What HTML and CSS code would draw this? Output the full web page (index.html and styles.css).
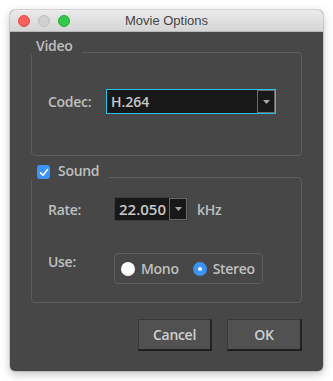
FILE: index.html
```html
<!DOCTYPE html>
<html lang="en">
<head>
  <meta charset="UTF-8">
  <meta name="viewport" content="width=device-width, initial-scale=1.0">
  <title>Movie Options</title>
  <link rel="stylesheet" href="styles.css">
</head>
<body>
  <div class="window">
    <div class="titlebar">
      <div class="lights">
        <span class="light red"></span>
        <span class="light gray"></span>
        <span class="light green"></span>
      </div>
      <div class="title">Movie Options</div>
    </div>
    <div class="content">
      <fieldset class="group video">
        <legend>Video</legend>
        <div class="group-body">
          <div class="row">
            <span class="field-label codec-label">Codec:</span>
            <div class="select codec">
              <span class="value">H.264</span>
              <span class="arrow"><svg width="7" height="4" viewBox="0 0 7 4"><path d="M0 0H7L3.5 4Z" fill="#a8a8a8"/></svg></span>
            </div>
          </div>
        </div>
      </fieldset>
      <fieldset class="group sound">
        <legend>
          <span class="checkbox"><svg width="10" height="9" viewBox="0 0 10 9"><path d="M1.5 4.8L4 7.2L8.6 1.5" fill="none" stroke="#fff" stroke-width="1.6" stroke-linecap="round" stroke-linejoin="round"/></svg></span>
          Sound
        </legend>
        <div class="group-body">
          <div class="row">
            <span class="field-label rate-label">Rate:</span>
            <div class="select rate">
              <span class="value">22.050</span>
              <span class="arrow"><svg width="7" height="4" viewBox="0 0 7 4"><path d="M0 0H7L3.5 4Z" fill="#a8a8a8"/></svg></span>
            </div>
            <span class="unit">kHz</span>
          </div>
          <div class="row use">
            <span class="field-label rate-label">Use:</span>
            <div class="radio-box">
              <span class="radio"></span>
              <span class="radio-text">Mono</span>
              <span class="radio on"></span>
              <span class="radio-text">Stereo</span>
            </div>
          </div>
        </div>
      </fieldset>
      <div class="buttons">
        <button class="btn cancel">Cancel</button>
        <button class="btn ok">OK</button>
      </div>
    </div>
  </div>
</body>
</html>
```

FILE: styles.css
```css
body {
  margin: 0;
  padding: 10px;
  background-color: #ffffff;
  font-family: "Open Sans", "Liberation Sans", sans-serif;
}
.window {
  width: 313px;
  border-radius: 5px;
  overflow: hidden;
  background-color: #474747;
  box-shadow: 0 0 0 1px rgba(0, 0, 0, 0.12), 0 3px 10px rgba(0, 0, 0, 0.25);
}
.titlebar {
  height: 22px;
  display: grid;
  grid-template-columns: 1fr auto 1fr;
  align-items: center;
  background: linear-gradient(#ebebeb, #d5d5d5);
  border-bottom: 1px solid #b9b9b9;
  box-sizing: border-box;
}
.lights {
  display: flex;
  gap: 8px;
  padding-left: 8px;
}
.light {
  width: 12px;
  height: 12px;
  border-radius: 50%;
  box-sizing: border-box;
}
.light.red {
  background-color: #fc605c;
  border: 1px solid #de4a45;
}
.light.gray {
  background-color: #d0d0d0;
  border: 1px solid #bdbdbd;
}
.light.green {
  background-color: #34c84a;
  border: 1px solid #27aa37;
}
.title {
  font-family: "Liberation Sans", Arial, sans-serif;
  font-size: 13px;
  color: #444444;
}
.content {
  padding: 6px 21px 20px 21px;
}
.group {
  margin: 0;
  padding: 0;
  border: 1px solid #5d5d5d;
  border-radius: 4px;
}
.group legend {
  display: flex;
  align-items: flex-start;
  padding: 0 10px 12px 4px;
  font-size: 14px;
  font-weight: 600;
  letter-spacing: -0.3px;
  line-height: 16px;
  color: #bfbfbf;
}
.sound {
  margin-top: 7px;
}
.checkbox {
  width: 13px;
  height: 14px;
  margin: 2px 8px 0 1px;
  border-radius: 3px;
  background-color: #3a93f5;
  display: flex;
  align-items: center;
  justify-content: center;
}
.group-body {
  padding: 23px 16px 41px 16px;
}
.sound .group-body {
  padding: 6px 16px 18px 16px;
}
.row {
  display: flex;
  align-items: center;
}
.row.use {
  align-items: flex-start;
  margin-top: 32px;
}
.field-label {
  font-size: 14px;
  font-weight: 600;
  letter-spacing: -0.3px;
  color: #bfbfbf;
}
.codec-label {
  width: 58px;
}
.rate-label {
  width: 66px;
}
.use .field-label {
  line-height: 16px;
  margin-top: 1px;
}
.select {
  display: flex;
  background-color: #181818;
  box-sizing: border-box;
}
.select .value {
  flex: 1;
  font-size: 14px;
  font-weight: 600;
  color: #c8c8c8;
  padding-left: 4px;
  display: flex;
  align-items: center;
}
.select .arrow {
  width: 18px;
  display: flex;
  align-items: center;
  justify-content: center;
  box-sizing: border-box;
  border: 1px solid #6b6b6b;
}
.codec {
  width: 170px;
  height: 25px;
  border: 1px solid #27c3e6;
}
.rate {
  width: 74px;
  height: 24px;
  border: 1px solid #3c3c3c;
}
.rate .value {
  font-size: 15px;
}
.unit {
  margin-left: 9px;
  font-size: 14px;
  font-weight: 600;
  letter-spacing: -0.3px;
  color: #bfbfbf;
}
.radio-box {
  width: 149px;
  height: 31px;
  box-sizing: border-box;
  border: 1px solid #5d5d5d;
  border-radius: 4px;
  display: flex;
  align-items: center;
  padding-left: 6px;
}
.radio {
  width: 14px;
  height: 14px;
  border-radius: 50%;
  background-color: #ffffff;
  box-sizing: border-box;
  position: relative;
}
.radio.on {
  background-color: #3a93f5;
  margin-left: 14px;
}
.radio.on::after {
  content: "";
  position: absolute;
  left: 5px;
  top: 5px;
  width: 4px;
  height: 4px;
  border-radius: 50%;
  background-color: #ffffff;
}
.radio-text {
  margin-left: 6px;
  font-size: 14px;
  font-weight: 600;
  letter-spacing: -0.3px;
  color: #bfbfbf;
}
.buttons {
  display: flex;
  justify-content: flex-end;
  gap: 15px;
  margin-top: 16px;
}
.btn {
  height: 32px;
  padding: 0;
  background-color: #515151;
  border-style: solid;
  border-width: 1px 2px 2px 1px;
  border-color: #383838 #222222 #1e1e1e #3a3a3a;
  font-family: "Open Sans", "Liberation Sans", sans-serif;
  font-size: 14px;
  font-weight: 600;
  letter-spacing: -0.3px;
  color: #d0d0d0;
}
.cancel {
  width: 74px;
}
.ok {
  width: 75px;
}
```
